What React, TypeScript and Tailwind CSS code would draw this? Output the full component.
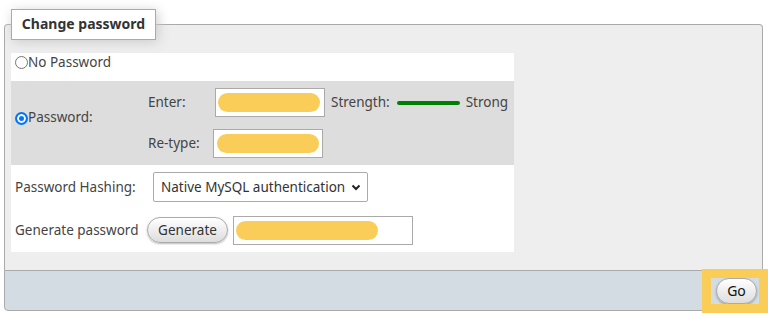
import React from "react";

const font = { fontFamily: '"Noto Sans", "Open Sans", sans-serif' };

function Radio({ checked }: { checked?: boolean }) {
  return checked ? (
    <span className="inline-block h-[13px] w-[13px] rounded-full border-[2px] border-[#0075ff] bg-[#0075ff] shadow-[inset_0_0_0_2px_#fff]" />
  ) : (
    <span className="inline-block h-[13px] w-[13px] rounded-full border border-[#767676] bg-white" />
  );
}

function Blob({ w }: { w: string }) {
  return <span className={`block h-[19px] rounded-full bg-[#f9cd57] ${w}`} />;
}

export default function App() {
  return (
    <div className="relative h-[319px] w-[768px] overflow-hidden bg-white text-[13.5px] text-[#444]" style={font}>
      <div className="ml-[4px] pt-[24px] w-[759px]">
        {/* fieldset body */}
        <div className="rounded-t-[4px] border border-b-0 border-[#aaa] bg-[#eee] pb-[18px]">
          <div className="-mt-[16px] ml-[6px] flex h-[31px] w-[145px] items-center justify-center border border-[#aaa] bg-white pb-[3px] text-[14px] font-bold text-[#333] shadow-[2px_2px_12px_#ccc]">
            Change password
          </div>

          <div className="ml-[6px] mt-[13px] w-[503px] bg-white">
            <div className="flex h-[28px] items-start pl-[4px] pt-[3px]">
              <Radio />
              <span className="leading-[13px]">No Password</span>
            </div>

            <div className="flex h-[84px] bg-[#ddd]">
              <div className="flex w-[136px] items-center pb-[10px] pl-[4px]">
                <Radio checked />
                <span className="leading-none">Password:</span>
              </div>
              <div className="flex flex-col pt-[7px]">
                <div className="flex h-[29px] items-center">
                  <span className="w-[68px] pl-[1px]">Enter:</span>
                  <div className="flex h-[29px] w-[110px] items-center border border-[#aaa] bg-white pl-[2px]">
                    <Blob w="w-[102px]" />
                  </div>
                  <span className="ml-[6px]">Strength:</span>
                  <span className="ml-[7px] h-[4px] w-[63px] rounded-full bg-[#008000]" />
                  <span className="ml-[6px]">Strong</span>
                </div>
                <div className="mt-[12px] flex h-[29px] items-center">
                  <span className="w-[66px] pl-[1px]">Re-type:</span>
                  <div className="flex h-[29px] w-[110px] items-center border border-[#aaa] bg-white pl-[3px]">
                    <Blob w="w-[102px]" />
                  </div>
                </div>
              </div>
            </div>

            <div className="flex h-[43px] items-center pl-[4px] pt-[1px]">
              <span className="w-[138px]">Password Hashing:</span>
              <div className="relative flex h-[30px] w-[215px] items-center rounded-[2px] border border-[#aaa] bg-white pl-[7px] text-[#333]">
                Native MySQL authentication
                <svg className="absolute right-[6px] top-[11px]" width="10" height="7" viewBox="0 0 10 7">
                  <path d="M1.5 1.5 L5 5 L8.5 1.5" fill="none" stroke="#222" strokeWidth="2" />
                </svg>
              </div>
            </div>

            <div className="flex h-[44px] items-center pl-[4px]">
              <span className="w-[132px]">Generate password</span>
              <button className="h-[26px] w-[81px] rounded-full border border-[#aaa] bg-gradient-to-b from-white to-[#ddd] text-[#333] shadow-[0_1px_2px_#bbb]">
                Generate
              </button>
              <div className="ml-[5px] flex h-[29px] w-[180px] items-center border border-[#aaa] bg-white pl-[2px]">
                <Blob w="w-[142px]" />
              </div>
            </div>
          </div>
        </div>

        {/* footer */}
        <div className="flex h-[41px] items-center justify-end rounded-b-[4px] border border-[#aaa] bg-[#d3dce3] pr-[5px]">
          <button className="h-[26px] w-[41px] rounded-full border border-[#aaa] bg-gradient-to-b from-white to-[#ddd] text-[14px] text-[#111] shadow-[0_1px_2px_#999]">
            Go
          </button>
        </div>
      </div>

      {/* highlight around Go */}
      <div className="pointer-events-none absolute left-[702px] top-[269px] h-[44px] w-[66px] border-[9px] border-[#f9cd57]" />
    </div>
  );
}
